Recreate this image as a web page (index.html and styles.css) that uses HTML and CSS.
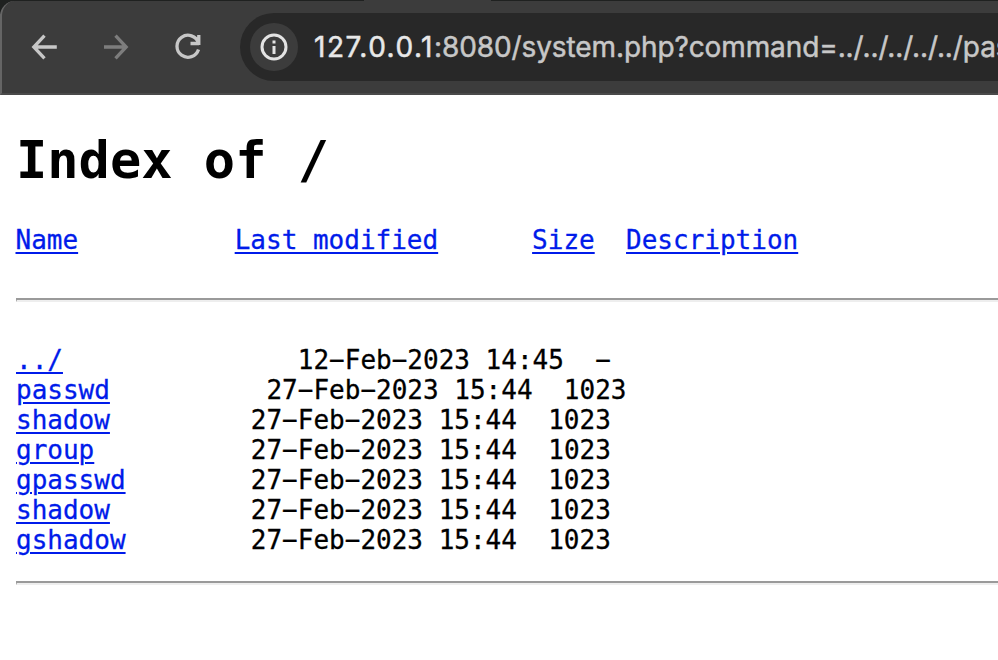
FILE: index.html
```html
<!DOCTYPE html>
<html lang="en"><head><meta charset="utf-8"><title>Index of /</title><link rel="stylesheet" href="styles.css"></head>
<body>
<header class="frame">
<div class="toolbar">
<nav class="controls">
<svg class="icon" viewBox="0 0 32 32"><path d="M28.8 16H6M16.5 4.6L5.8 16l10.7 11.4"/></svg>
<svg class="icon dim" viewBox="0 0 32 32"><path d="M4 16H26M15.5 4.6L26.2 16 15.5 27.4"/></svg>
<svg class="icon" viewBox="0 0 32 32"><path d="M27 12.5h-8.5M26.8 4v10M26.5 12A11 11 0 1 0 26.5 18.5"/></svg>
</nav>
<div class="address"><span class="info"><svg class="info-icon" viewBox="0 0 32 32"><circle cx="16" cy="16" r="12"/><path d="M16 15v8M16 9.4v3"/></svg></span><span class="url"><span class="host">127.0.0.1</span><span class="path">:8080/system.php?command=../../../../../pas</span></span></div>
</div>
</header>
<main class="page">
<h1 class="title">Index of /</h1>
<pre class="columns"><a href="#">Name</a>          <a href="#">Last modified</a>      <a href="#">Size</a>  <a href="#">Description</a></pre>
<hr class="rule">
<pre class="listing"><a href="#">../</a>               12−Feb−2023 14:45  −
<a href="#">passwd</a>          27−Feb−2023 15:44  1023
<a href="#">shadow</a>         27−Feb−2023 15:44  1023
<a href="#">group</a>          27−Feb−2023 15:44  1023
<a href="#">gpasswd</a>        27−Feb−2023 15:44  1023
<a href="#">shadow</a>         27−Feb−2023 15:44  1023
<a href="#">gshadow</a>        27−Feb−2023 15:44  1023</pre>
<hr class="rule">
</main></body></html>
```
FILE: styles.css
```css
* { box-sizing: border-box; }
body { margin: 0; background: #fff; color: #000; overflow: hidden; }
.frame { height: 95px; padding-top: 1px; background: linear-gradient(90deg, transparent 364px, #3c3c3c 364px 491px, transparent 491px) 0 0 / 100% 1px no-repeat, linear-gradient(#1f2120 0 14px, #656565 14px); }
.toolbar { height: 94px; background: #3c3c3c; display: flex; align-items: flex-start; padding-top: 12px; border-left: 2px solid #656565; border-bottom: 2px solid #4a4a4a; border-top-left-radius: 15px; }
.controls { display: flex; align-items: center; width: 238px; height: 68px; padding-left: 26px; gap: 40px; flex: none; }
.icon { width: 32px; height: 32px; fill: none; stroke: #c7c7c7; stroke-width: 3.3; }
.dim { stroke: #7d7d7d; }
.address { width: 800px; flex: none; height: 68px; border-radius: 34px; background: #282828; display: flex; align-items: center; padding-left: 10px; }
.info { flex: none; width: 48px; height: 48px; border-radius: 50%; background: #3c3c3c; display: grid; place-items: center; }
.info-icon { width: 32px; height: 32px; fill: none; stroke: #e3e3e3; stroke-width: 3; }
.url { margin-left: 16px; white-space: nowrap; font: 28px Inter, sans-serif; color: #e8e8e8; -webkit-text-stroke: 0.5px; }
.host { letter-spacing: 1.5px; }
.path { color: #c7c7c7; letter-spacing: -0.1px; }
.page { padding: 34px 0 0 16px; font-family: "DejaVu Sans Mono", monospace; }
.title { font-size: 52px; line-height: 62px; margin: 0; }
pre { font: 26px/30px "DejaVu Sans Mono", monospace; margin: 0; -webkit-text-stroke: 0.3px; }
.columns { margin-top: 34px; margin-left: -0.5px; }
a { color: #001bea; text-decoration-thickness: 2px; text-underline-offset: 3px; }
.rule { border: 0; border-top: 2px solid #9a9a9a; border-bottom: 2px solid #eee; border-left: 1px solid #9a9a9a; height: 4px; margin: 43px 0; }
.listing + .rule { margin-top: 26px; }
```
